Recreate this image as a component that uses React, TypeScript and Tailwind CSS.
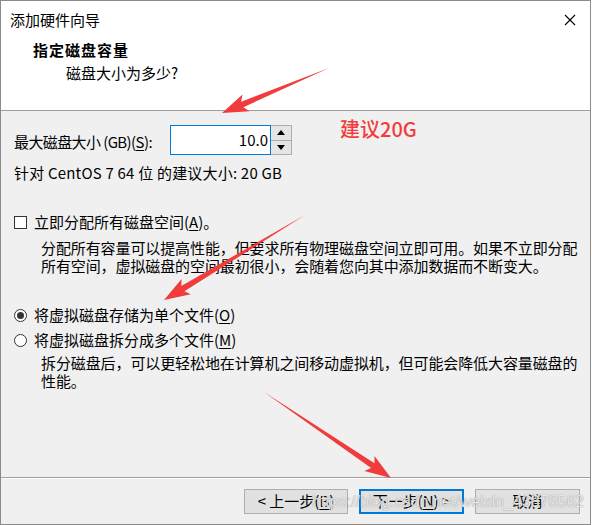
import React from "react";

const font = { fontFamily: '"Noto Sans CJK SC", "Microsoft YaHei", sans-serif' };

function arrowPoints(tail: [number, number], tip: [number, number], headLen = 22, headW = 9, shaftW = 3) {
  const dx = tip[0] - tail[0];
  const dy = tip[1] - tail[1];
  const len = Math.hypot(dx, dy);
  const ux = dx / len;
  const uy = dy / len;
  const nx = -uy;
  const ny = ux;
  const bx = tip[0] - ux * headLen;
  const by = tip[1] - uy * headLen;
  const pts: [number, number][] = [
    tail,
    [bx + nx * shaftW, by + ny * shaftW],
    [bx + nx * headW - ux * 4, by + ny * headW - uy * 4],
    tip,
    [bx - nx * headW - ux * 4, by - ny * headW - uy * 4],
    [bx - nx * shaftW, by - ny * shaftW],
  ];
  return pts.map((p) => `${p[0].toFixed(1)},${p[1].toFixed(1)}`).join(" ");
}

function U({ children }: { children: React.ReactNode }) {
  return <span className="underline underline-offset-2">{children}</span>;
}

function Radio({ checked }: { checked?: boolean }) {
  return (
    <span className="w-[13px] h-[13px] rounded-full border border-[#333] bg-white flex items-center justify-center shrink-0">
      {checked && <span className="w-[7px] h-[7px] rounded-full bg-[#333]" />}
    </span>
  );
}

export default function App() {
  return (
    <div className="relative w-[592px] h-[525px] bg-white overflow-hidden text-[#000]" style={font}>
      <div className="w-[591px] h-[525px] border border-[#8a8a8a] flex flex-col bg-[#f0f0f0]">
        {/* header white area */}
        <div className="bg-white h-[110px] border-b border-[#a0a0a0] flex flex-col shrink-0">
          <div className="h-[37px] flex items-center justify-between pl-[9px] pr-[13px]">
            <span className="text-[15px] leading-[18px]">添加硬件向导</span>
            <svg width="12" height="12" viewBox="0 0 12 12" className="mr-[1px]">
              <path d="M1 1 L11 11 M11 1 L1 11" stroke="#000" strokeWidth="1.1" fill="none" />
            </svg>
          </div>
          <div className="pl-[32px] mt-[3px] text-[15px] leading-[18px] font-bold tracking-[1px]">指定磁盘容量</div>
          <div className="pl-[65px] mt-[5px] text-[15px] leading-[18px]">磁盘大小为多少?</div>
        </div>

        {/* body */}
        <div className="flex-1 pl-[13px] pt-[14px] text-[15px] leading-[18px]">
          <div className="flex items-center h-[30px]">
            <span className="w-[156px] mt-[3px] tracking-[-0.6px]">
              最大磁盘大小 (GB)(<U>S</U>):
            </span>
            <div className="w-[101px] h-[30px] border border-[#0078d7] bg-white flex items-center justify-end pr-[2px]">
              <span className="text-[15px]">10.0</span>
            </div>
            <div className="w-[21px] h-[30px] border border-[#adadad] border-l-0 flex flex-col bg-[#e5e5e5]">
              <div className="flex-1 flex items-center justify-center border-b border-[#adadad]">
                <svg width="8" height="5" viewBox="0 0 8 5"><path d="M0 5 L4 0 L8 5 Z" fill="#000" /></svg>
              </div>
              <div className="flex-1 flex items-center justify-center">
                <svg width="8" height="5" viewBox="0 0 8 5"><path d="M0 0 L4 5 L8 0 Z" fill="#000" /></svg>
              </div>
            </div>
            <span className="ml-[48px] -mt-[22px] text-[20px] font-medium text-[#f23c3c]">建议20G</span>
          </div>
          <div className="mt-[9px] h-[18px] tracking-[0.2px]">针对 CentOS 7 64 位 的建议大小: 20 GB</div>

          <div className="mt-[31px] h-[18px] flex items-center gap-[7px]">
            <span className="w-[13px] h-[13px] border border-[#333] bg-white shrink-0" />
            <span>立即分配所有磁盘空间(<U>A</U>)。</span>
          </div>
          <div className="mt-[8px] pl-[27px] tracking-[-0.1px]">
            <div>分配所有容量可以提高性能，但要求所有物理磁盘空间立即可用。如果不立即分配</div>
            <div>所有空间，虚拟磁盘的空间最初很小，会随着您向其中添加数据而不断变大。</div>
          </div>

          <div className="mt-[31px] h-[18px] flex items-center gap-[7px]">
            <Radio checked />
            <span>将虚拟磁盘存储为单个文件(<U>O</U>)</span>
          </div>
          <div className="mt-[7px] h-[18px] flex items-center gap-[7px]">
            <Radio />
            <span>将虚拟磁盘拆分成多个文件(<U>M</U>)</span>
          </div>
          <div className="mt-[5px] pl-[27px] tracking-[-0.1px]">
            <div>拆分磁盘后，可以更轻松地在计算机之间移动虚拟机，但可能会降低大容量磁盘的</div>
            <div>性能。</div>
          </div>
        </div>

        {/* footer */}
        <div className="h-[47px] shrink-0 border-t border-[#a0a0a0] flex flex-col">
          <div className="h-[1px] bg-white" />
          <div className="flex justify-end gap-[11px] pr-[10px] pt-[10px] text-[15px]">
            <div className="w-[104px] h-[25px] border border-[#adadad] bg-[#e1e1e1] flex items-center justify-center">
              &lt; 上一步(<U>B</U>)
            </div>
            <div className="w-[105px] h-[25px] border-2 border-[#0078d7] bg-[#e1e1e1] flex items-center justify-center">
              下一步(<U>N</U>) &gt;
            </div>
            <div className="w-[105px] h-[25px] border border-[#adadad] bg-[#e1e1e1] flex items-center justify-center">
              取消
            </div>
          </div>
        </div>
      </div>

      {/* annotations */}
      <svg className="absolute inset-0 pointer-events-none" width="592" height="525">
        <polygon points={arrowPoints([329, 68], [222, 113])} fill="#f03c3c" />
        <polygon points={arrowPoints([305, 215], [164, 300])} fill="#f03c3c" />
        <polygon points={arrowPoints([264, 392], [391, 478])} fill="#f03c3c" />
      </svg>

      {/* watermark */}
      <div
        className="absolute left-[312px] top-[492px] text-[16px] leading-[20px] text-white/80 [text-shadow:0_0_1px_rgba(110,110,110,1)] whitespace-nowrap"
        style={{ fontFamily: '"Liberation Sans", Arial, sans-serif' }}
      >
        https://blog.csdn.net/weixin_43876562
      </div>
    </div>
  );
}
